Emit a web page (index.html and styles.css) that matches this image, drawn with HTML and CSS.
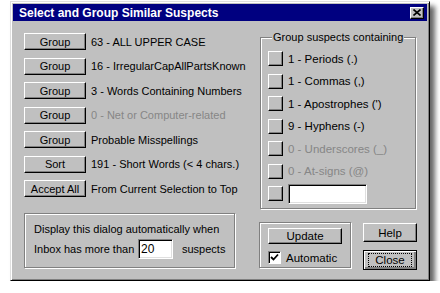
FILE: index.html
```html
<!DOCTYPE html>
<html lang="en">
  <head>
    <meta charset="UTF-8" />
    <title>Select and Group Similar Suspects</title>
    <link rel="stylesheet" href="styles.css">
  </head>
  <body>
    <div class="window">
      <!-- Title bar -->
      <div class="titlebar">
        <span class="title">Select and Group Similar Suspects</span>
        <button class="title-close" type="button">
          <svg width="8" height="7" viewBox="0 0 8 7">
            <path d="M0.5 0.5 L7.5 6.5 M7.5 0.5 L0.5 6.5" stroke="#000" stroke-width="1.6" fill="none"/>
          </svg>
        </button>
      </div>

      <div class="content">
        <!-- Left: rule buttons -->
        <div class="left-col">
          <ul class="rules">
            <li class="rule"><button class="btn rule-btn" type="button">Group</button><span class="rule-label">63 - ALL UPPER CASE</span></li>
            <li class="rule"><button class="btn rule-btn" type="button">Group</button><span class="rule-label">16 - IrregularCapAllPartsKnown</span></li>
            <li class="rule"><button class="btn rule-btn" type="button">Group</button><span class="rule-label">3 - Words Containing Numbers</span></li>
            <li class="rule"><button class="btn rule-btn" type="button">Group</button><span class="rule-label disabled">0 - Net or Computer-related</span></li>
            <li class="rule"><button class="btn rule-btn" type="button">Group</button><span class="rule-label">Probable Misspellings</span></li>
            <li class="rule"><button class="btn rule-btn" type="button">Sort</button><span class="rule-label">191 - Short Words (&lt; 4 chars.)</span></li>
            <li class="rule"><button class="btn rule-btn" type="button">Accept All</button><span class="rule-label">From Current Selection to Top</span></li>
          </ul>

          <div class="panel auto-panel">
            <div class="auto-line">Display this dialog automatically when</div>
            <div class="auto-line auto-threshold">
              <span class="auto-text">Inbox has more than</span>
              <input class="field threshold" type="text" value="20">
              <span class="auto-suffix">suspects</span>
            </div>
          </div>
        </div>

        <!-- Right: character groups -->
        <div class="right-col">
          <fieldset class="chars-panel">
            <legend>Group suspects containing</legend>
            <div class="char-row"><button class="btn square" type="button"></button><span class="char-label">1 - Periods (.)</span></div>
            <div class="char-row"><button class="btn square" type="button"></button><span class="char-label">1 - Commas (,)</span></div>
            <div class="char-row"><button class="btn square" type="button"></button><span class="char-label">1 - Apostrophes (')</span></div>
            <div class="char-row"><button class="btn square" type="button"></button><span class="char-label">9 - Hyphens (-)</span></div>
            <div class="char-row"><button class="btn square" type="button"></button><span class="char-label disabled">0 - Underscores (_)</span></div>
            <div class="char-row"><button class="btn square" type="button"></button><span class="char-label disabled">0 - At-signs (@)</span></div>
            <div class="char-row"><button class="btn square" type="button"></button><input class="field custom-char" type="text"></div>
          </fieldset>

          <div class="actions">
            <div class="panel update-panel">
              <button class="btn update-btn" type="button">Update</button>
              <label class="check-row">
                <span class="checkbox">
                  <svg width="9" height="9" viewBox="0 0 9 9">
                    <polyline points="1,4 3.5,6.5 8,1.5" stroke="#000" stroke-width="1.8" fill="none"/>
                  </svg>
                </span>
                Automatic
              </label>
            </div>
            <div class="side-buttons">
              <button class="btn side-btn help-btn" type="button">Help</button>
              <button class="btn side-btn btn-default" type="button"><span class="focus">Close</span></button>
            </div>
          </div>
        </div>
      </div>
    </div>
  </body>
</html>
```

FILE: styles.css
```css
body {
  margin: 0;
  padding: 1px 0 0 10px;
  background: #ffffff;
  font-family: "Liberation Sans", Arial, sans-serif;
  font-size: 11px;
  color: #000000;
}

/* Window frame */
.window {
  width: 420px;
  height: 280px;
  box-sizing: border-box;
  padding: 2px;
  background: #c0c0c0;
  border: 1px solid;
  border-color: #dfdfdf #000000 #000000 #dfdfdf;
  box-shadow: inset 1px 1px #ffffff, inset -1px -1px #808080, 5px 5px 5px rgba(0, 0, 0, 0.6);
}

.titlebar {
  height: 17px;
  display: flex;
  align-items: center;
  justify-content: space-between;
  padding: 0 3px 0 6px;
  background: #000080;
  color: #ffffff;
}

.title {
  font-weight: bold;
  font-size: 12px;
}

.title-close {
  width: 14px;
  height: 12px;
  padding: 0;
  display: flex;
  align-items: center;
  justify-content: center;
  background: #c0c0c0;
  border: 1px solid;
  border-color: #ffffff #000000 #000000 #ffffff;
  box-shadow: inset -1px -1px #808080;
}

/* Shared controls */
.btn {
  box-sizing: border-box;
  margin: 0;
  padding: 0;
  font: inherit;
  color: #000000;
  background: #c0c0c0;
  border: 1px solid;
  border-color: #ffffff #000000 #000000 #ffffff;
  box-shadow: inset -1px -1px #808080;
}

.field {
  box-sizing: border-box;
  margin: 0;
  padding: 0 2px;
  font: inherit;
  font-size: 12px;
  background: #ffffff;
  border: 1px solid;
  border-color: #808080 #ffffff #ffffff #808080;
  box-shadow: inset 1px 1px #000000, inset -1px -1px #dfdfdf;
  outline: none;
}

.panel {
  box-sizing: border-box;
  border: 1px solid #808080;
  box-shadow: inset 1px 1px #ffffff, 1px 1px #ffffff;
}

.disabled {
  color: #868686;
}

.content {
  display: grid;
  grid-template-columns: 212px 158px;
  column-gap: 23px;
  padding: 12px 0 0 11px;
}

/* Left column */
.rules {
  list-style: none;
  margin: 0;
  padding: 0;
  display: flex;
  flex-direction: column;
  gap: 7.5px;
}

.rule {
  display: flex;
  align-items: center;
  height: 17px;
}

.rule-btn {
  width: 62px;
  height: 17px;
  flex: none;
}

.rule-label {
  margin-left: 5px;
  white-space: nowrap;
}

.auto-panel {
  width: 211px;
  height: 55px;
  margin-top: 15.5px;
  padding: 8px 0 0 9px;
}

.auto-line {
  line-height: 14px;
  white-space: nowrap;
}

.auto-threshold {
  display: flex;
  align-items: center;
  margin-top: 3px;
}

.auto-text {
  width: 104px;
}

.threshold {
  width: 35px;
  height: 20px;
}

.auto-suffix {
  margin-left: 9px;
}

/* Right column */
.right-col {
  margin-top: -2px;
}

.chars-panel {
  width: 156px;
  box-sizing: border-box;
  margin: 0 0 0 1px;
  padding: 7px 0 7px 7px;
  border: 1px solid #808080;
  box-shadow: inset 1px 1px #ffffff, 1px 1px #ffffff;
  display: flex;
  flex-direction: column;
  gap: 7.5px;
}

.chars-panel legend {
  margin-left: 4px;
  padding: 0 1px;
  line-height: 13px;
  background: #c0c0c0;
  font-size: 11px;
}

.char-row {
  display: flex;
  align-items: center;
  height: 15px;
}

.square {
  width: 15px;
  height: 15px;
  flex: none;
}

.char-label {
  margin-left: 5px;
  font-size: 11.5px;
  white-space: nowrap;
}

.custom-char {
  width: 79px;
  height: 20px;
  margin-left: 5px;
  flex: none;
}

.actions {
  display: flex;
  margin-top: 13px;
}

.update-panel {
  width: 92px;
  height: 46px;
  padding: 5px 0 0 8px;
}

.update-btn {
  display: block;
  width: 74px;
  height: 16px;
  font-size: 11.5px;
}

.check-row {
  display: flex;
  align-items: center;
  margin-top: 7px;
  gap: 5px;
  font-size: 11.5px;
}

.checkbox {
  width: 13px;
  height: 13px;
  box-sizing: border-box;
  display: flex;
  align-items: center;
  justify-content: center;
  background: #ffffff;
  border: 1px solid;
  border-color: #808080 #ffffff #ffffff #808080;
  box-shadow: inset 1px 1px #000000;
}

.side-buttons {
  display: flex;
  flex-direction: column;
  gap: 8px;
  margin: 1px 0 0 12px;
}

.side-btn {
  width: 54px;
  height: 19px;
  font-size: 11.5px;
}

.btn-default {
  height: 20px;
  border-color: #000000;
  box-shadow: inset 1px 1px #ffffff, inset -2px -2px #808080, inset -1px -1px #000000;
  display: flex;
  align-items: center;
  justify-content: center;
}

.focus {
  display: block;
  width: 42px;
  line-height: 12px;
  outline: 1px dotted #000000;
}
```
